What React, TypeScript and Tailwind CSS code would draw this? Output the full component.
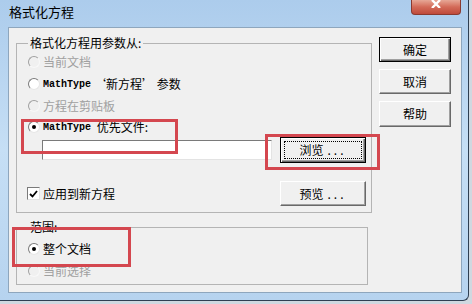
import type { ReactNode } from 'react'

/* Win7 classic dialog — MathType "格式化方程" options. */

const CJK = "font-['Noto_Sans_CJK_SC',sans-serif]"
const MONO = "font-['Liberation_Mono',monospace] font-bold text-[10px]"

function Radio({ checked, disabled }: { checked?: boolean; disabled?: boolean }) {
  return (
    <span
      className={`w-[12px] h-[12px] shrink-0 rounded-full border flex items-center justify-center ${
        disabled
          ? 'border-t-[#a0a0a0] border-l-[#a0a0a0] border-r-[#f8f8f8] border-b-[#f8f8f8] bg-[#f0f0f0]'
          : 'border-t-[#7a7a7a] border-l-[#7a7a7a] border-r-[#e6e6e6] border-b-[#e6e6e6] bg-white'
      }`}
    >
      {checked && <span className="w-[4px] h-[4px] rounded-full bg-black" />}
    </span>
  )
}

function Btn({
  children,
  strong,
  focus,
  className = '',
}: {
  children: ReactNode
  strong?: boolean
  focus?: boolean
  className?: string
}) {
  return (
    <div
      className={`flex bg-[#f0f0f0] text-[12px] text-black ${CJK} ${
        strong
          ? 'border border-black shadow-[inset_1px_1px_0_#fff,inset_-1px_-1px_0_#696969,inset_-2px_-2px_0_#a0a0a0]'
          : 'border border-t-white border-l-white border-r-[#696969] border-b-[#696969] shadow-[inset_-1px_-1px_0_#a0a0a0]'
      } ${className}`}
    >
      <div
        className={`flex-1 m-[3px] flex items-center justify-center ${
          focus ? 'border border-dotted border-black' : ''
        }`}
      >
        {children}
      </div>
    </div>
  )
}

export default function App() {
  return (
    <div className={`w-[472px] h-[304px] bg-[#cfd8e0] overflow-hidden relative ${CJK}`}>
      <div className="w-[469px] h-[301px] bg-gradient-to-b from-[#acccec] via-[#c6dff5] to-[#b6d3ef] border-r border-b border-[#2f3f52] rounded-br-[6px] flex flex-col">
        {/* title bar */}
        <div className="h-[27px] flex items-start shrink-0">
          <span className="pl-[9px] pt-[3px] text-[13px] leading-[18px] text-black">格式化方程</span>
          <div className="ml-auto mr-[7px] w-[50px] h-[15px] rounded-b-[4px] border border-t-0 border-[#8a3a30] bg-gradient-to-b from-[#e6a796] via-[#d36a58] to-[#bf4a3b] flex justify-center">
            <svg width="12" height="8" viewBox="0 0 12 8">
              <path d="M2 0 L10 8 M10 0 L2 8" stroke="#fff" strokeWidth="2.4" />
            </svg>
          </div>
        </div>

        {/* client area */}
        <div className="ml-[8px] w-[454px] h-[266px] border border-[#8ea6bd] bg-[#f0f0f0] flex">
          <div className="pl-[7px] pt-[8px] flex flex-col">
            <fieldset className="w-[356px] h-[177px] border border-[#b4b4b4] pl-[11px] pr-[5px]">
              <legend className="px-[2px] text-[12px] leading-[14px] text-black">格式化方程用参数从:</legend>
              <div className="pt-[1px] flex flex-col">
                <div className="h-[22px] flex items-center gap-[3px] text-[12px] text-[#a0a0a0]">
                  <Radio disabled />
                  <span>当前文档</span>
                </div>
                <div className="h-[22px] flex items-center gap-[3px] text-[12px] text-black">
                  <Radio />
                  <span className={MONO}>MathType</span>
                  <span>‘新方程’ 参数</span>
                </div>
                <div className="h-[22px] flex items-center gap-[3px] text-[12px] text-[#a0a0a0]">
                  <Radio disabled />
                  <span>方程在剪贴板</span>
                </div>
                <div className="h-[20px] flex items-center gap-[3px] text-[12px] text-black">
                  <Radio checked />
                  <span className={MONO}>MathType</span>
                  <span>&nbsp;优先文件:</span>
                </div>
                <div className="h-[26px] flex items-center">
                  <div className="ml-[14px] w-[230px] h-[20px] bg-white border border-t-[#7a7a7a] border-l-[#7a7a7a] border-r-[#e3e3e3] border-b-[#e3e3e3]" />
                  <Btn strong focus className="ml-[8px] w-[86px] h-[26px]">
                    浏览<span className="ml-[4px] tracking-[3px]">...</span>
                  </Btn>
                </div>
                <div className="mt-[18px] h-[25px] flex items-center text-[12px] text-black">
                  <span className="-ml-[1px] w-[13px] h-[13px] bg-white border border-t-[#7a7a7a] border-l-[#7a7a7a] border-r-[#e3e3e3] border-b-[#e3e3e3] flex items-center justify-center">
                    <svg width="9" height="8" viewBox="0 0 9 8">
                      <path d="M1 4 L3.5 6.5 L8 1" stroke="#000" strokeWidth="1.8" fill="none" />
                    </svg>
                  </span>
                  <span className="ml-[3px]">应用到新方程</span>
                  <Btn className="ml-auto w-[86px] h-[25px]">
                    预览<span className="ml-[4px] tracking-[3px]">...</span>
                  </Btn>
                </div>
              </div>
            </fieldset>

            <fieldset className="mt-[7px] w-[352px] h-[65px] border border-[#b4b4b4] pl-[11px]">
              <legend className="px-[2px] text-[12px] leading-[14px] text-black">范围:</legend>
              <div className="pt-[4px] flex flex-col text-[12px]">
                <div className="h-[22px] flex items-center gap-[3px] text-black">
                  <Radio checked />
                  <span>整个文档</span>
                </div>
                <div className="mt-[1px] h-[20px] flex items-center gap-[3px] text-[#a0a0a0]">
                  <Radio disabled />
                  <span>当前选择</span>
                </div>
              </div>
            </fieldset>
          </div>

          <div className="ml-[7px] pt-[9px] flex flex-col gap-[7px]">
            <Btn strong className="w-[72px] h-[25px]">确定</Btn>
            <Btn className="w-[72px] h-[25px]">取消</Btn>
            <Btn className="w-[72px] h-[26px]">帮助</Btn>
          </div>
        </div>
      </div>

      {/* red annotation boxes drawn over the screenshot */}
      <div className="absolute left-[21px] top-[119px] w-[157px] h-[35px] border-[3px] border-[#d4474f]" />
      <div className="absolute left-[265px] top-[134px] w-[115px] h-[36px] border-[3px] border-[#d4474f]" />
      <div className="absolute left-[12px] top-[227px] w-[119px] h-[40px] border-[3px] border-[#d4474f]" />
    </div>
  )
}
